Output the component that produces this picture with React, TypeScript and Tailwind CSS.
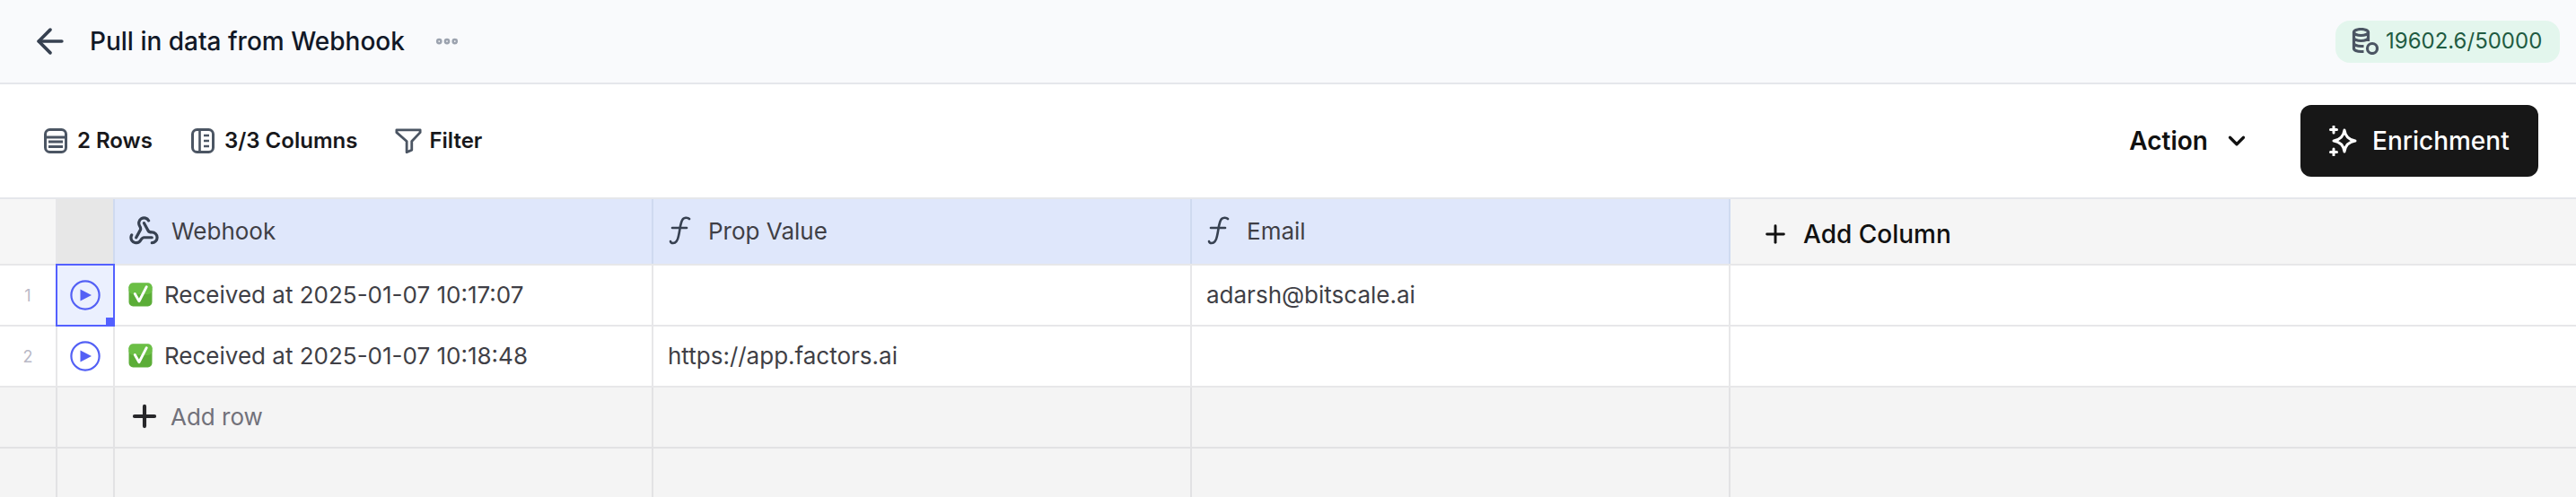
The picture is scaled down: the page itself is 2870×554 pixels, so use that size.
import { ArrowLeft, ChevronDown, Ellipsis, Plus, Webhook } from "lucide-react";

const rowGrid = "grid grid-cols-[64px_64px_600px_600px_600px_1fr]";

const RowsIcon = () => (
    <svg width="28" height="28" viewBox="0 0 28 28" fill="none" stroke="#4b5563" strokeWidth="3">
        <rect x="2.5" y="1.5" width="23" height="25" rx="5" />
        <path d="M3 10h22M6 15h16M6 20.500h16" />
    </svg>
);

const ColumnsIcon = () => (
    <svg width="28" height="28" viewBox="0 0 28 28" fill="none" stroke="#4b5563" strokeWidth="3">
        <rect x="2.5" y="1.5" width="23" height="25" rx="5" />
        <path d="M10.5 2v24M15 8h6M15 14h6M15 20h6" strokeWidth="2.600" />
    </svg>
);

const FilterIcon = () => (
    <svg width="30" height="30" viewBox="0 0 32 30" fill="none" stroke="#4b5563" strokeWidth="3" strokeLinejoin="round">
        <path d="M2 2h28v3L20 15.500V26l-6 2.500V15.500L2 5z" />
    </svg>
);

const CoinsIcon = () => (
    <svg width="30" height="30" viewBox="0 0 30 30" fill="none" stroke="#4b5563" strokeWidth="3.200">
        <ellipse cx="10.500" cy="5" rx="8" ry="3.500" />
        <path d="M2.500 5v18c0 2 3.500 3.500 8 3.500h3M18.500 5v10M2.500 11c0 2 3.500 3.500 8 3.500s8-1.500 8-3.500M2.500 17c0 2 3.500 3.500 8 3.500h3" />
        <circle cx="23" cy="23" r="5.500" />
    </svg>
);

const SparkIcon = () => (
    <svg width="32" height="34" viewBox="0 0 32 34" fill="none" stroke="white" strokeWidth="3" strokeLinejoin="round" strokeLinecap="round">
        <path d="M17 5c1 7 5 11 12 12-7 1-11 5-12 12-1-7-5-11-12-12 7-1 11-5 12-12z" />
        <path d="M5 1v7M1.500 4.500h7M5 26v7M1.500 29.500h7" />
    </svg>
);

const FunctionIcon = () => (
    <svg width="28" height="32" viewBox="0 0 28 32" fill="none" stroke="#374151" strokeWidth="2.600" strokeLinecap="round">
        <path d="M25 3c-1.500-1.500-5-2-7 0-3 3-3 10-5 19-1 5-3 8-6 8-2 0-3-1-3-2" />
        <path d="M6 13h16" />
    </svg>
);

const PlayIcon = () => (
    <svg width="34" height="34" viewBox="0 0 34 34" fill="none">
        <circle cx="17" cy="17" r="15.600" stroke="#5360f5" strokeWidth="2.200" />
        <path d="M11.500 10.500v13L24 17z" fill="#5360f5" />
    </svg>
);

// emoji font isn't available, so the green check is drawn
const CheckEmoji = () => (
    <svg width="27" height="27" viewBox="0 0 26 26" className="shrink-0">
        <rect x="0.500" y="0.500" width="25" height="25" rx="4.500" fill="#5bad37" />
        <rect x="0.500" y="0.500" width="25" height="12" rx="4.500" fill="#6bbf45" />
        <path d="M7 12l4.500 8L19.500 4.500" fill="none" stroke="white" strokeWidth="2.800" strokeLinecap="round" strokeLinejoin="round" />
    </svg>
);

const ToolbarItem = ({ icon, label, gap }: { icon: React.ReactNode; label: string; gap: string }) => (
    <div className={`flex items-center ${gap} text-[24px] font-semibold text-[#18181b]`}>
        {icon}
        <span>{label}</span>
    </div>
);

const HeaderCell = ({ icon, label, gap }: { icon: React.ReactNode; label: string; gap: string }) => (
    <div className={`flex items-center ${gap} bg-[#dfe7fb] border-r-2 border-[#cfdaf0] pl-[15px] pb-[2px] text-[26px] text-[#3f3f46]`}>
        {icon}
        <span>{label}</span>
    </div>
);

const DataRow = ({ index, received, prop, email, selected }: { index: number; received: string; prop?: string; email?: string; selected?: boolean }) => (
    <div className={`${rowGrid} h-[68px] bg-white border-b-2 border-[#e7e7e9] text-[26px] text-[#3f3f46]`}>
        <div className="flex items-center justify-center border-r-2 border-[#e7e7e9] text-[18px] text-[#b9b9c6]">{index}</div>
        <div className={`relative flex items-center justify-center border-r-2 border-[#e7e7e9] ${selected ? "bg-[#ebf0fe]" : ""}`}>
            <PlayIcon />
            {selected && (
                <div className="absolute -left-[2px] -right-[2px] -top-[2px] -bottom-[2px] border-2 border-[#5360ff]">
                    <div className="absolute -right-[1px] -bottom-[1px] h-[9px] w-[9px] bg-[#5360ff]" />
                </div>
            )}
        </div>
        <div className="flex items-center gap-[13px] border-r-2 border-[#e7e7e9] pl-[15px] pb-[2px]">
            <CheckEmoji />
            <span>{received}</span>
        </div>
        <div className="flex items-center border-r-2 border-[#e7e7e9] pl-[16px] pb-[2px]">{prop}</div>
        <div className="flex items-center border-r-2 border-[#e7e7e9] pl-[16px] pb-[2px]">{email}</div>
        <div />
    </div>
);

const App = () => {
    return (
        <div className="flex h-[554px] w-full flex-col overflow-hidden bg-white font-['Inter',sans-serif]">
            {/* top bar */}
            <div className="flex h-[94px] shrink-0 items-center justify-between border-b-2 border-[#e5e7eb] bg-[#f9fafc] pl-[34px] pr-[18px]">
                <div className="flex items-center">
                    <ArrowLeft size={44} strokeWidth={2} color="#374151" />
                    <span className="ml-[22px] text-[28px] font-medium text-[#111827]">Pull in data from Webhook</span>
                    <Ellipsis size={30} strokeWidth={3.400} color="#9ca3af" className="ml-[32px]" />
                </div>
                <div className="flex h-[47px] w-[250px] items-center gap-[8px] rounded-[16px] bg-[#e3f6ed] pl-[18px] text-[24px] text-[#1f5b42]">
                    <CoinsIcon />
                    <span>19602.6/50000</span>
                </div>
            </div>

            {/* toolbar */}
            <div className="flex h-[128px] shrink-0 items-center justify-between border-b-2 border-[#e5e7eb] pl-[48px] pr-[42px]">
                <div className="flex items-center gap-[42px]">
                    <ToolbarItem gap="gap-[10px]" icon={<RowsIcon />} label="2 Rows" />
                    <ToolbarItem gap="gap-[10px]" icon={<ColumnsIcon />} label="3/3 Columns" />
                    <ToolbarItem gap="gap-[8px]" icon={<FilterIcon />} label="Filter" />
                </div>
                <div className="flex items-center">
                    <div className="flex items-center gap-[17px] text-[28px] font-semibold text-[#111111]">
                        <span>Action</span>
                        <ChevronDown size={30} strokeWidth={2.600} />
                    </div>
                    <button className="ml-[56px] flex h-[80px] w-[265px] items-center gap-[16px] rounded-[12px] bg-[#171717] pl-[32px] text-[28px] font-medium text-white">
                        <SparkIcon />
                        <span>Enrichment</span>
                    </button>
                </div>
            </div>

            {/* grid */}
            <div className={`${rowGrid} h-[74px] shrink-0 border-b-2 border-[#e7e7e9]`}>
                <div className="border-r-2 border-[#e7e7e9] bg-[#f6f6f6]" />
                <div className="border-r-2 border-[#cfdaf0] bg-[#e7e7e7]" />
                <HeaderCell gap="gap-[13px]" icon={<Webhook size={35} strokeWidth={2.200} color="#374151" />} label="Webhook" />
                <HeaderCell gap="gap-[18px]" icon={<FunctionIcon />} label="Prop Value" />
                <HeaderCell gap="gap-[18px]" icon={<FunctionIcon />} label="Email" />
                <div className="flex items-center gap-[15px] bg-[#f5f5f5] pl-[34px] pt-[6px] text-[28px] font-medium text-[#111111]">
                    <Plus size={32} strokeWidth={2.200} />
                    <span>Add Column</span>
                </div>
            </div>
            <DataRow index={1} received="Received at 2025-01-07 10:17:07" email="adarsh@bitscale.ai" selected />
            <DataRow index={2} received="Received at 2025-01-07 10:18:48" prop="https://app.factors.ai" />
            <div className={`${rowGrid} h-[68px] shrink-0 border-b-2 border-[#e2e2e4] bg-[#f4f4f4]`}>
                <div className="border-r-2 border-[#e2e2e4]" />
                <div className="border-r-2 border-[#e2e2e4]" />
                <div className="flex items-center gap-[10px] border-r-2 border-[#e2e2e4] pl-[14px] pb-[2px] text-[26px] text-[#71717a]">
                    <Plus size={38} strokeWidth={2.600} color="#27272a" />
                    <span>Add row</span>
                </div>
                <div className="border-r-2 border-[#e2e2e4]" />
                <div className="border-r-2 border-[#e2e2e4]" />
                <div />
            </div>
            <div className={`${rowGrid} flex-1 bg-[#f4f4f4]`}>
                <div className="border-r-2 border-[#e2e2e4]" />
                <div className="border-r-2 border-[#e2e2e4]" />
                <div className="border-r-2 border-[#e2e2e4]" />
                <div className="border-r-2 border-[#e2e2e4]" />
                <div className="border-r-2 border-[#e2e2e4]" />
                <div />
            </div>
        </div>
    );
};

export default App;
